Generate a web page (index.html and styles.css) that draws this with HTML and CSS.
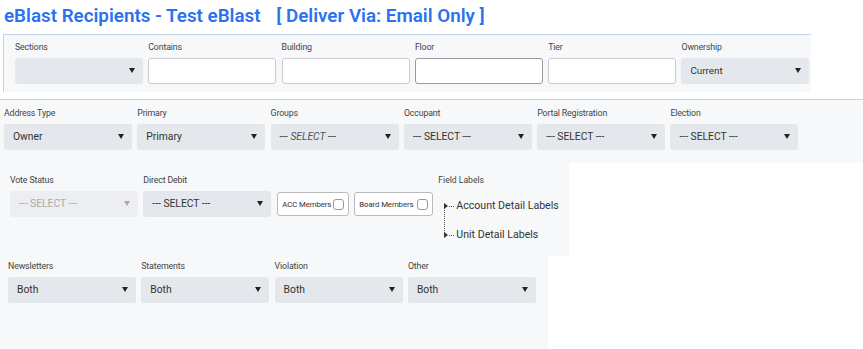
FILE: index.html
```html
<!DOCTYPE html>
<html lang="en">
<head>
  <meta charset="UTF-8">
  <title>eBlast Recipients</title>
  <link rel="stylesheet" href="styles.css">
</head>
<body>
  <h1 class="title">eBlast Recipients - Test eBlast <span class="via">[ Deliver Via: Email Only ]</span></h1>

  <!-- location filters -->
  <div class="panel top-panel">
    <div class="field">
      <label>Sections</label>
      <div class="select"></div>
    </div>
    <div class="field">
      <label>Contains</label>
      <div class="input"></div>
    </div>
    <div class="field">
      <label>Building</label>
      <div class="input"></div>
    </div>
    <div class="field">
      <label>Floor</label>
      <div class="input focus"></div>
    </div>
    <div class="field">
      <label>Tier</label>
      <div class="input"></div>
    </div>
    <div class="field">
      <label>Ownership</label>
      <div class="select small">Current</div>
    </div>
  </div>

  <!-- recipient filters -->
  <div class="row row-address">
    <div class="field">
      <label>Address Type</label>
      <div class="select">Owner</div>
    </div>
    <div class="field">
      <label>Primary</label>
      <div class="select">Primary</div>
    </div>
    <div class="field">
      <label>Groups</label>
      <div class="select italic">--- SELECT ---</div>
    </div>
    <div class="field">
      <label>Occupant</label>
      <div class="select">--- SELECT ---</div>
    </div>
    <div class="field">
      <label>Portal Registration</label>
      <div class="select">--- SELECT ---</div>
    </div>
    <div class="field">
      <label>Election</label>
      <div class="select">--- SELECT ---</div>
    </div>
  </div>

  <div class="row row-vote">
    <div class="field">
      <label>Vote Status</label>
      <div class="select disabled">--- SELECT ---</div>
    </div>
    <div class="field">
      <label>Direct Debit</label>
      <div class="select">--- SELECT ---</div>
    </div>
    <div class="check-box acc">ACC Members <span class="box"></span></div>
    <div class="check-box board">Board Members <span class="box"></span></div>
    <div class="field-labels">
      <label>Field Labels</label>
      <ul class="tree">
        <li>Account Detail Labels</li>
        <li>Unit Detail Labels</li>
      </ul>
    </div>
  </div>

  <div class="row row-docs">
    <div class="field">
      <label>Newsletters</label>
      <div class="select">Both</div>
    </div>
    <div class="field">
      <label>Statements</label>
      <div class="select">Both</div>
    </div>
    <div class="field">
      <label>Violation</label>
      <div class="select">Both</div>
    </div>
    <div class="field">
      <label>Other</label>
      <div class="select">Both</div>
    </div>
  </div>
</body>
</html>
```

FILE: styles.css
```css
* { box-sizing: border-box; margin: 0; padding: 0; }
body {
  font-family: Roboto, "Liberation Sans", Arial, sans-serif;
  color: #333;
  background: #fff;
}
/* page title */
.title {
  font-size: 18.8px;
  font-weight: 600;
  color: #2a72f0;
  line-height: 20px;
  padding: 6px 4px 8px;
  white-space: pre;
}
.title .via { margin-left: 11px; }

/* field blocks */
.field {
  width: 128px;
  display: flex;
  flex-direction: column;
}
.field label {
  font-size: 8.8px;
  letter-spacing: -0.15px;
  line-height: 12px;
  height: 12px;
  margin-bottom: 5px;
  color: #444;
}
.select {
  position: relative;
  height: 26px;
  background: #e4e7eb;
  border-radius: 3px;
  font-size: 10.3px;
  line-height: 26px;
  padding-left: 9px;
  color: #333;
}
.select::after {
  content: "";
  position: absolute;
  right: 8px;
  top: 10px;
  border-left: 3.5px solid transparent;
  border-right: 3.5px solid transparent;
  border-top: 5px solid #222;
}
.select.small { font-size: 9.8px; }
.select.italic { font-style: italic; color: #555; }
.select.disabled { background: #eceef1; color: #aaa; }
.select.disabled::after { border-top-color: #aaa; }
.input {
  height: 26px;
  background: #fff;
  border: 1px solid #c9cbcf;
  border-radius: 3px;
}
.input.focus { border-color: #9a9a9a; }

/* top location panel */
.top-panel {
  margin-left: 3px;
  width: 808px;
  height: 58px;
  background: #f7f8fa;
  border-top: 1px solid #c3d4ea;
  border-left: 1px solid #c3d4ea;
  display: flex;
  gap: 5px;
  padding: 6px 0 0 11px;
}
.top-panel .field:nth-child(n+2) { margin-left: 0.3px; }

/* filter rows */
.row {
  background: #f7f8fa;
  display: flex;
  gap: 5px;
}
.row-address {
  margin-top: 7px;
  border-top: 1px solid #c3d4ea;
  height: 64px;
  padding: 7px 0 0 4px;
}
.row-vote {
  width: 569px;
  height: 93px;
  padding: 11px 0 0 10px;
}
.row-docs {
  width: 548px;
  height: 93px;
  padding: 4px 0 0 8px;
}
.row .field:nth-child(n+2) { margin-left: 0.3px; }

/* checkbox chips */
.check-box {
  align-self: flex-start;
  margin-top: 18px;
  height: 24px;
  background: #fff;
  border: 1px solid #bbb;
  border-radius: 3px;
  font-size: 7.8px;
  letter-spacing: -0.1px;
  white-space: nowrap;
  display: flex;
  align-items: center;
  padding: 0 4px 0 4px;
  color: #333;
}
.check-box.acc { width: 72px; margin-left: 1px; }
.check-box.board { width: 79px; }
.check-box .box {
  width: 11px;
  height: 11px;
  border: 1px solid #999;
  border-radius: 3px;
  margin-left: auto;
  background: #fff;
}

/* field labels tree */
.field-labels { margin-left: 0; }
.field-labels label {
  display: block;
  font-size: 8.6px;
  line-height: 12px;
  color: #444;
}
.tree {
  list-style: none;
  position: relative;
  margin-top: 11px;
  padding-left: 18px;
  font-size: 10.6px;
  color: #333;
}
.tree::before {
  content: "";
  position: absolute;
  left: 6px;
  top: 9px;
  height: 29px;
  border-left: 1px dotted #555;
}
.tree li {
  position: relative;
  height: 29px;
  line-height: 18px;
}
.tree li::before {
  content: "";
  position: absolute;
  left: -12px;
  top: 6px;
  border-top: 3px solid transparent;
  border-bottom: 3px solid transparent;
  border-left: 4px solid #333;
}
.tree li::after {
  content: "";
  position: absolute;
  left: -7px;
  top: 9px;
  width: 5px;
  border-top: 1px dotted #555;
}
```
